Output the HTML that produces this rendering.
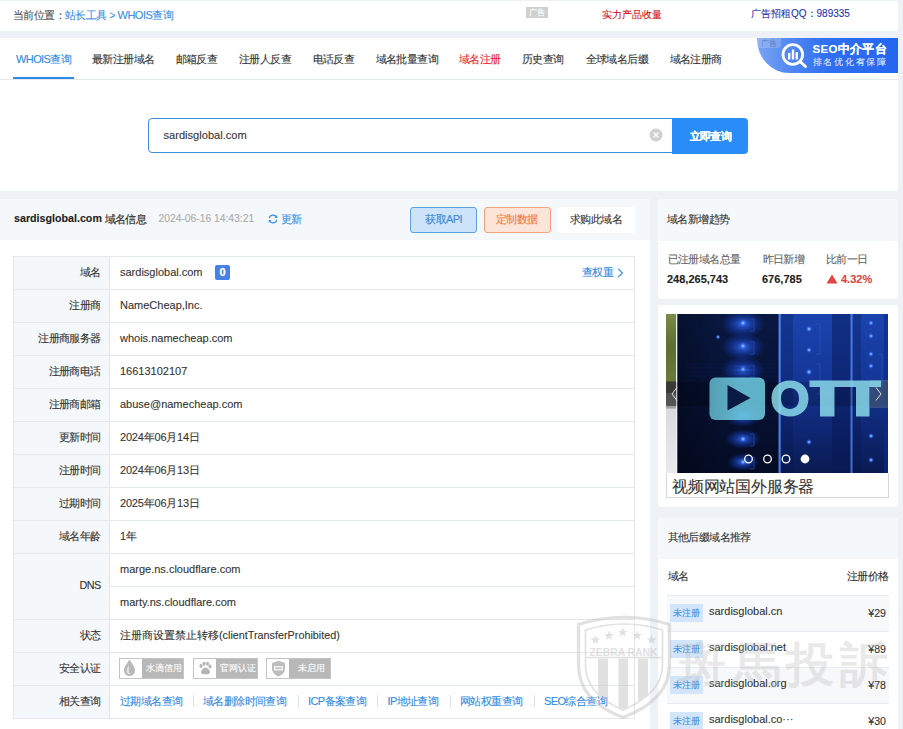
<!DOCTYPE html>
<html><head><meta charset="utf-8">
<style>
*{margin:0;padding:0;box-sizing:border-box}
html,body{width:903px;height:729px;overflow:hidden}
body{-webkit-text-stroke:.1px;background:#eef1f5;font-family:"Liberation Sans",sans-serif;color:#333;position:relative}
.abs{position:absolute}
.t{position:absolute;white-space:nowrap;line-height:1}
#top{left:0;top:1px;width:898px;height:30px;background:#fff;border-radius:0 3px 3px 0}
#nav{left:0;top:38px;width:898px;height:152.6px;background:#fff;border-radius:0 3px 3px 0}
#navline{left:0;top:79px;width:898px;height:1px;background:#e6e9ee}
.nv{font-size:11px;letter-spacing:-.6px;color:#333;top:53.5px}
.c{font-size:11px;letter-spacing:-.6px}
#left{left:0;top:199px;width:650px;height:540px;background:#fff}
#lhead{left:0;top:199px;width:650px;height:41px;background:#f5f8fb}
.card{position:absolute;left:658px;width:239.5px;background:#fff;border-radius:3px;overflow:hidden}
.chead{position:absolute;left:0;top:0;width:240px;height:41px;background:#f5f8fb}
.rows{position:absolute;left:13px;top:256px;width:622px;height:463px;border:1px solid #e4e7eb;border-right:none;border-bottom:none}
.lab{position:absolute;left:13px;width:97px;background:#f5f8fb;border-right:1px solid #e4e7eb}
.hl{position:absolute;height:1px;background:#e4e7eb}
.lt{position:absolute;right:802.4px;font-size:11px;letter-spacing:-.6px;color:#333;white-space:nowrap;line-height:1}
.vt{position:absolute;left:120px;font-size:11px;color:#333;white-space:nowrap;line-height:1}
.badge{position:absolute;top:658px;height:20.5px;width:65px;background:#b8b8b8;border:1px solid #c4c4c4}
.badge .ic{position:absolute;left:0;top:0;width:22px;height:18.5px;background:#fff}
.badge .bt{position:absolute;left:26px;top:4.5px;font-size:9px;color:#fff;line-height:1;white-space:nowrap}
.lk{position:absolute;top:696px;font-size:11px;letter-spacing:-.6px;color:#2f8ae5;white-space:nowrap;line-height:1}
.sep{position:absolute;top:695px;width:1px;height:12px;background:#dde2e8}
.rl{position:absolute;left:667px;width:222px;height:1px;background:#e8ebef}
.rb{position:absolute;left:670px;width:33px;height:18px;background:#d3e5fa;color:#3a8ee6;font-size:8.8px;line-height:18px;text-align:center}
.rd{position:absolute;left:709px;font-size:11px;color:#333;white-space:nowrap;line-height:1}
.rp{position:absolute;right:17px;font-size:10.6px;color:#333;white-space:nowrap;line-height:1}
</style></head><body>
<div id="top" class="abs"></div>
<div class="t c" style="left:13px;top:10px;color:#555">当前位置：</div>
<div class="t c" style="left:65px;top:10px;color:#3a8ee6">站长工具</div>
<div class="t" style="left:109.5px;top:10.5px;font-size:10px;color:#3a8ee6">&gt;</div>
<div class="t c" style="left:117.5px;top:10px;color:#3a8ee6;letter-spacing:-.5px">WHOIS查询</div>
<div class="abs" style="left:526px;top:6.5px;width:22px;height:11px;background:#d0d0d0;color:#fff;font-size:8px;text-align:center;line-height:11px">广告</div>
<div class="t" style="left:602px;top:10px;font-size:10px;color:#d4101a">实力产品收量</div>
<div class="t" style="left:751px;top:9px;font-size:10px;color:#2433b0">广告招租QQ：989335</div>

<div id="nav" class="abs"></div>
<div id="navline" class="abs"></div>
<div class="t nv" style="left:16px;color:#2d8ae6">WHOIS查询</div>
<div class="abs" style="left:13px;top:76.5px;width:60.5px;height:2.5px;background:#2d8ae6"></div>
<div class="t nv" style="left:92px">最新注册域名</div>
<div class="t nv" style="left:175.5px">邮箱反查</div>
<div class="t nv" style="left:239px">注册人反查</div>
<div class="t nv" style="left:312.5px">电话反查</div>
<div class="t nv" style="left:375.5px">域名批量查询</div>
<div class="t nv" style="left:459px;color:#e8262e">域名注册</div>
<div class="t nv" style="left:522px">历史查询</div>
<div class="t nv" style="left:585.5px">全球域名后缀</div>
<div class="t nv" style="left:669.5px">域名注册商</div>

<!-- SEO banner -->
<div class="abs" style="left:757px;top:38px;width:141px;height:34.5px;background:linear-gradient(90deg,#79a4f3 0%,#4f86f2 25%,#2f6ff0 50%,#2466ee 100%);border-bottom-left-radius:32px 34px"></div>
<div class="abs" style="left:757px;top:38px;width:24px;height:10px;background:rgba(255,255,255,.18);border-bottom-right-radius:3px"></div>
<div class="t" style="left:761px;top:39.5px;font-size:7.5px;color:rgba(60,90,160,.55)">广告</div>
<svg class="abs" style="left:778px;top:40px" width="32" height="30" viewBox="0 0 32 30">
  <circle cx="14.8" cy="14.5" r="9.8" fill="none" stroke="#fff" stroke-width="2.8"/>
  <line x1="22" y1="21.5" x2="27.5" y2="26.5" stroke="#fff" stroke-width="3" stroke-linecap="round"/>
  <rect x="10" y="13" width="2.4" height="6.5" fill="#fff"/>
  <rect x="13.8" y="9.5" width="2.4" height="10" fill="#fff"/>
  <rect x="17.6" y="12" width="2.4" height="7.5" fill="#fff"/>
</svg>
<div class="t" style="left:812.5px;top:44px;font-size:11.5px;color:#fff;font-weight:bold;letter-spacing:.3px">SEO中介平台</div>
<div class="t" style="left:812.5px;top:58px;font-size:9px;color:rgba(255,255,255,.85);letter-spacing:1.75px">排名优化有保障</div>

<!-- search -->
<div class="abs" style="left:148px;top:118px;width:526px;height:35px;border:1px solid #3d8fda;border-radius:4px 0 0 4px;background:#fff"></div>
<div class="t" style="left:163.5px;top:129.5px;font-size:11.1px;color:#333">sardisglobal.com</div>
<svg class="abs" style="left:649px;top:127.5px" width="14" height="14" viewBox="0 0 14 14"><circle cx="7" cy="7" r="6.5" fill="#cfcfcf"/><path d="M4.6 4.6L9.4 9.4M9.4 4.6L4.6 9.4" stroke="#fff" stroke-width="1.4"/></svg>
<div class="abs" style="left:672px;top:118px;width:76px;height:35.5px;background:#2a8cf6;border-radius:0 4px 4px 0"></div>
<div class="t" style="left:689.5px;top:130.5px;font-size:11px;letter-spacing:-.6px;color:#fff;font-weight:bold;-webkit-text-stroke:.2px #fff">立即查询</div>

<!-- left panel -->
<div id="left" class="abs"></div>
<div id="lhead" class="abs"></div>
<div class="t" style="left:14px;top:213px;font-size:10.7px;font-weight:bold;color:#222">sardisglobal.com</div>
<div class="t c" style="left:104.5px;top:214px;color:#333;-webkit-text-stroke:.2px #333">域名信息</div>
<div class="t" style="left:158.5px;top:214px;font-size:10.3px;color:#aaa">2024-06-16 14:43:21</div>
<svg class="abs" style="left:267.5px;top:214px" width="10" height="10" viewBox="0 0 10 10"><path d="M8.6 3.2A4 4 0 0 0 1.2 4.2M1.4 6.8A4 4 0 0 0 8.8 5.8" fill="none" stroke="#3a8ee6" stroke-width="1.2"/><path d="M9.3 1v3H6.5z M0.7 9V6h2.8z" fill="#3a8ee6"/></svg>
<div class="t c" style="left:280.5px;top:214px;color:#3a8ee6">更新</div>
<div class="abs" style="left:410px;top:206.5px;width:67px;height:26px;background:#cde3f9;border:1px solid #5ea2e2;border-radius:3px"></div>
<div class="t c" style="left:425.3px;top:214px;color:#3a87d6">获取API</div>
<div class="abs" style="left:483.5px;top:206.5px;width:67px;height:26px;background:#fce4d8;border:1px solid #f2a37d;border-radius:3px"></div>
<div class="t c" style="left:496px;top:214px;color:#f27a3e">定制数据</div>
<div class="abs" style="left:558px;top:206.5px;width:77px;height:26px;background:#fff;border-radius:3px"></div>
<div class="t c" style="left:570px;top:214px;color:#333">求购此域名</div>

<!-- table -->
<div class="lab" style="top:256px;height:463px"></div>
<div class="abs" style="left:13px;top:256px;width:622px;height:463px;border:1px solid #e4e7eb"></div>
<div class="hl" style="left:13px;top:289px;width:622px"></div>
<div class="hl" style="left:13px;top:322px;width:622px"></div>
<div class="hl" style="left:13px;top:355px;width:622px"></div>
<div class="hl" style="left:13px;top:388px;width:622px"></div>
<div class="hl" style="left:13px;top:421px;width:622px"></div>
<div class="hl" style="left:13px;top:454px;width:622px"></div>
<div class="hl" style="left:13px;top:487px;width:622px"></div>
<div class="hl" style="left:13px;top:520px;width:622px"></div>
<div class="hl" style="left:13px;top:553px;width:622px"></div>
<div class="hl" style="left:110px;top:586px;width:525px"></div>
<div class="hl" style="left:13px;top:619px;width:622px"></div>
<div class="hl" style="left:13px;top:652px;width:622px"></div>
<div class="hl" style="left:13px;top:685px;width:622px"></div>

<div class="lt" style="top:267px">域名</div>
<div class="lt" style="top:300px">注册商</div>
<div class="lt" style="top:333px">注册商服务器</div>
<div class="lt" style="top:366px">注册商电话</div>
<div class="lt" style="top:399px">注册商邮箱</div>
<div class="lt" style="top:432px">更新时间</div>
<div class="lt" style="top:465px">注册时间</div>
<div class="lt" style="top:498px">过期时间</div>
<div class="lt" style="top:531px">域名年龄</div>
<div class="lt" style="top:580px;font-size:10.8px">DNS</div>
<div class="lt" style="top:630px">状态</div>
<div class="lt" style="top:663px">安全认证</div>
<div class="lt" style="top:696px">相关查询</div>

<div class="vt" style="top:267px">sardisglobal.com</div>
<div class="abs" style="left:215px;top:265px;width:15px;height:15px;background:#4681e3;border-radius:2px;color:#fff;font-size:11px;font-weight:bold;text-align:center;line-height:15px;-webkit-text-stroke:.3px #fff">0</div>
<div class="t c" style="left:582px;top:267px;color:#2f8ae5">查权重</div>
<svg class="abs" style="left:617px;top:268px" width="7" height="10" viewBox="0 0 7 10"><path d="M1.2 .8L5.4 5 1.2 9.2" fill="none" stroke="#2f8ae5" stroke-width="1.1"/></svg>
<div class="vt" style="top:300px">NameCheap,Inc.</div>
<div class="vt" style="top:333px">whois.namecheap.com</div>
<div class="vt" style="top:366px">16613102107</div>
<div class="vt" style="top:399px">abuse@namecheap.com</div>
<div class="vt" style="top:432px;letter-spacing:-.2px">2024年06月14日</div>
<div class="vt" style="top:465px;letter-spacing:-.2px">2024年06月13日</div>
<div class="vt" style="top:498px;letter-spacing:-.2px">2025年06月13日</div>
<div class="vt" style="top:531px">1年</div>
<div class="vt" style="top:564px">marge.ns.cloudflare.com</div>
<div class="vt" style="top:597px">marty.ns.cloudflare.com</div>
<div class="vt" style="top:630px;font-size:10.8px">注册商设置禁止转移(clientTransferProhibited)</div>

<div class="badge" style="left:119px"><div class="ic"></div><div class="bt">水滴信用</div></div>
<svg class="abs" style="left:123px;top:659px" width="13" height="18" viewBox="0 0 13 18"><path d="M6.5 .5C4.2 4.5 1 7.5 1 11.5a5.5 5.5 0 0 0 11 0C12 7.5 8.8 4.5 6.5 .5z" fill="#b8b8b8"/><path d="M6.2 6C5 8 3.5 9.8 3.5 12a3 3 0 0 0 4 2.8C5.5 13.5 5.5 10 6.2 6z" fill="#e6e6e6"/></svg>
<div class="badge" style="left:193px"><div class="ic"></div><div class="bt">官网认证</div></div>
<svg class="abs" style="left:197px;top:661px" width="16" height="14" viewBox="0 0 16 14"><g fill="#b5b5b5"><ellipse cx="4" cy="5" rx="1.6" ry="2"/><ellipse cx="7" cy="2.8" rx="1.6" ry="2"/><ellipse cx="10.5" cy="2.8" rx="1.6" ry="2"/><ellipse cx="13" cy="5.5" rx="1.5" ry="1.9"/><path d="M8.5 6.5c-2 0-4.5 3-4.5 4.8 0 1.5 1.5 2 4.5 2s4.5-.5 4.5-2c0-1.8-2.5-4.8-4.5-4.8z"/></g></svg>
<div class="badge" style="left:266px"><div class="ic"></div><div class="bt" style="left:30.5px">未启用</div></div>
<svg class="abs" style="left:270.5px;top:659.5px" width="15" height="17" viewBox="0 0 15 17"><path d="M7.5 .8L14 3v5.5c0 4-3 6.5-6.5 8C4 15 1 12.5 1 8.5V3z" fill="#bdbdbd"/><rect x="3" y="6" width="9" height="4.5" fill="#f2f2f2"/><rect x="4.5" y="7.2" width="6" height="2" fill="#c8c8c8"/></svg>

<div class="lk" style="left:120px">过期域名查询</div>
<div class="sep" style="left:192.5px"></div>
<div class="lk" style="left:203px">域名删除时间查询</div>
<div class="sep" style="left:297.5px"></div>
<div class="lk" style="left:308px">ICP备案查询</div>
<div class="sep" style="left:376.5px"></div>
<div class="lk" style="left:387.5px">IP地址查询</div>
<div class="sep" style="left:449.5px"></div>
<div class="lk" style="left:460px">网站权重查询</div>
<div class="sep" style="left:533.5px"></div>
<div class="lk" style="left:544px">SEO综合查询</div>

<!-- right cards -->
<div class="card" style="top:199px;height:99.5px"><div class="chead" style="height:42px"></div></div>
<div class="t c" style="left:667px;top:214px;color:#333">域名新增趋势</div>
<div class="t c" style="left:667.5px;top:253.5px;color:#666">已注册域名总量</div>
<div class="t c" style="left:762.5px;top:253.5px;color:#666">昨日新增</div>
<div class="t c" style="left:826px;top:253.5px;color:#666">比前一日</div>
<div class="t" style="left:667px;top:273.5px;font-size:11px;font-weight:bold;color:#222">248,265,743</div>
<div class="t" style="left:762px;top:273.5px;font-size:11px;font-weight:bold;color:#222">676,785</div>
<svg class="abs" style="left:825.5px;top:274px" width="12" height="10" viewBox="0 0 12 10"><path d="M6 .5L11.5 9.5H.5z" fill="#e04444"/></svg>
<div class="t" style="left:841px;top:273.5px;font-size:11px;font-weight:bold;color:#e04444">4.32%</div>

<div class="card" style="top:305px;height:202px"></div>
<svg class="abs" style="left:666px;top:314px" width="222" height="159" viewBox="0 0 222 159">
  <defs>
    <linearGradient id="gl" x1="0" y1="0" x2="0" y2="1">
      <stop offset="0" stop-color="#091841"/><stop offset=".5" stop-color="#071234"/><stop offset="1" stop-color="#040b24"/>
    </linearGradient>
    <linearGradient id="gr" x1="0" y1="0" x2="0" y2="1">
      <stop offset="0" stop-color="#1a44ae"/><stop offset=".45" stop-color="#143594"/><stop offset="1" stop-color="#091a52"/>
    </linearGradient>
    <linearGradient id="gx" x1="0" y1="0" x2="1" y2="0">
      <stop offset="0" stop-color="#000" stop-opacity=".35"/><stop offset=".5" stop-color="#000" stop-opacity="0"/>
    </linearGradient>
    <radialGradient id="halo"><stop offset="0" stop-color="#3a74ff" stop-opacity=".85"/><stop offset=".5" stop-color="#1f50e0" stop-opacity=".45"/><stop offset="1" stop-color="#1a40d0" stop-opacity="0"/></radialGradient>
    <radialGradient id="spot"><stop offset="0" stop-color="#c0e0ff"/><stop offset=".4" stop-color="#4a88ff" stop-opacity=".8"/><stop offset="1" stop-color="#2050ff" stop-opacity="0"/></radialGradient>
    <linearGradient id="strip" x1="0" y1="0" x2="0" y2="1">
      <stop offset="0" stop-color="#7a8a48"/><stop offset=".2" stop-color="#5d6e30"/><stop offset=".42" stop-color="#6a7a3a"/><stop offset=".43" stop-color="#252a20"/><stop offset=".5" stop-color="#252a20"/><stop offset=".5" stop-color="#8c8c8c"/><stop offset=".59" stop-color="#a0a0a0"/><stop offset=".6" stop-color="#d9d9de"/><stop offset="1" stop-color="#e9e9ee"/>
    </linearGradient>
  </defs>
  <rect x="0" y="0" width="222" height="159" fill="url(#gl)"/>
  <rect x="0" y="0" width="110" height="159" fill="url(#gx)"/>
  <rect x="0" y="0" width="10" height="159" fill="url(#strip)"/>
  <rect x="10" y="0" width="1.3" height="159" fill="#eef2f8"/>
  <rect x="113" y="0" width="109" height="159" fill="url(#gr)"/>
  <rect x="166" y="0" width="19" height="159" fill="#061650" opacity=".45"/>
  <rect x="115" y="0" width="12" height="159" fill="#061650" opacity=".3"/>
  <rect x="187" y="0" width="8" height="159" fill="#061650" opacity=".3"/>
  <rect x="112.5" y="0" width="2.2" height="159" fill="#5a8cf4" opacity=".85"/>
  <rect x="184.5" y="0" width="2" height="159" fill="#5a8cf4" opacity=".75"/>
  <rect x="218" y="0" width="4" height="159" fill="#0a2a90" opacity=".6"/>
  <g fill="url(#halo)">
    <ellipse cx="77" cy="10" rx="22" ry="14"/><ellipse cx="77" cy="33" rx="22" ry="14"/><ellipse cx="77" cy="56" rx="22" ry="14"/>
    <ellipse cx="77" cy="102" rx="18" ry="11"/><ellipse cx="77" cy="125" rx="18" ry="10"/><ellipse cx="77" cy="148" rx="16" ry="9"/>
  </g>
  <g fill="url(#spot)">
    <circle cx="77" cy="9" r="4"/><circle cx="77" cy="32" r="4"/><circle cx="77" cy="55" r="4"/>
    <circle cx="77" cy="125" r="3.5"/><circle cx="77" cy="148" r="3.5"/>
    <circle cx="143" cy="15" r="3.5"/><circle cx="143" cy="36" r="3"/><circle cx="143" cy="58" r="3.5"/><circle cx="143" cy="128" r="3"/>
    <circle cx="205" cy="9" r="3"/><circle cx="205" cy="22" r="3"/><circle cx="205" cy="40" r="3"/><circle cx="205" cy="52" r="3"/><circle cx="205" cy="122" r="3"/><circle cx="205" cy="146" r="3"/>
    <circle cx="52" cy="23" r="2.5"/>
  </g>
  <g stroke="#2a58c8" stroke-width="1" fill="none" opacity=".6">
    <path d="M84 5h4v12h-4M84 28h4v12h-4M84 51h4v12h-4M84 120h4v12h-4M84 143h4v12h-4"/>
    <path d="M150 10h4v30h-4M150 50h4v30h-4M212 40h4v30h-4"/>
  </g>
  <g stroke="#0d2260" stroke-width=".6" opacity=".7">
    <path d="M20 50H110M20 54H110M20 58H110M20 62H110"/>
  </g>
  <rect x="0" y="68" width="222" height="24" fill="#000" opacity=".18"/>
  <rect x="0" y="68" width="10" height="24" fill="#444" opacity=".7"/>
  <rect x="204" y="66" width="18" height="28" fill="#8a9a8a" opacity=".3"/>
  <path d="M11 73.5L6 80 11 86.5" fill="none" stroke="#e0e0e0" stroke-width="1"/>
  <path d="M210 73.5L215 80 210 86.5" fill="none" stroke="#e0e0e0" stroke-width="1"/>
  <rect x="43.5" y="63.5" width="55.5" height="42.5" rx="6" fill="#6cc8de" opacity=".88"/>
  <rect x="43.5" y="63.5" width="55.5" height="42.5" rx="6" fill="url(#gx)" opacity=".3"/>
  <path d="M61.5 71L84.5 84 61.5 96.5z" fill="#0a1a42"/>
  <g fill="#8fe0f0" opacity=".82">
    <path fill-rule="evenodd" d="M124 66.5c-10.5 0-18.5 6.5-18.5 18s8 18 18.5 18 18.5-6.5 18.5-18-8-18-18.5-18zm0 7.5c5 0 9 3.5 9 10.5s-4 10.5-9 10.5-9-3.5-9-10.5 4-10.5 9-10.5z"/>
    <path d="M143.5 66.5h71.5v6.5h-11.5v29.5h-13.5v-29.5h-21.5v29.5h-14.5v-29.5h-10.5z"/>
  </g>
  <circle cx="82.5" cy="145" r="3.8" fill="none" stroke="#fff" stroke-width="1.3"/>
  <circle cx="101.5" cy="145" r="3.8" fill="none" stroke="#fff" stroke-width="1.3"/>
  <circle cx="120" cy="145" r="3.8" fill="none" stroke="#fff" stroke-width="1.3"/>
  <circle cx="139" cy="145" r="4.4" fill="#fff"/>
</svg>
<div class="abs" style="left:665.5px;top:473px;width:223px;height:25px;border:1px solid #d5d7da;border-top:none;background:#fff"></div>
<div class="t" style="left:672px;top:479px;font-size:16px;letter-spacing:-.2px;color:#333">视频网站国外服务器</div>

<div class="card" style="top:517.5px;height:220px"><div class="chead" style="height:41px"></div></div>
<div class="t c" style="left:667.5px;top:532px;color:#333">其他后缀域名推荐</div>
<div class="t c" style="left:667.5px;top:571px;color:#333">域名</div>
<div class="t c" style="left:847px;top:571px;color:#333">注册价格</div>
<div class="rl" style="top:595px"></div>
<div class="abs" style="left:667px;top:596px;width:222px;height:35px;background:#f7f8fa"></div>
<div class="rl" style="top:631px"></div>
<div class="rl" style="top:667px"></div>
<div class="abs" style="left:667px;top:668px;width:222px;height:35px;background:#f7f8fa"></div>
<div class="rl" style="top:703px"></div>
<div class="rb" style="top:604px">未注册</div><div class="rd" style="top:605.5px">sardisglobal.cn</div><div class="rp" style="top:607.5px">¥29</div>
<div class="rb" style="top:640px">未注册</div><div class="rd" style="top:641.5px">sardisglobal.net</div><div class="rp" style="top:643.5px">¥89</div>
<div class="rb" style="top:676px">未注册</div><div class="rd" style="top:677.5px">sardisglobal.org</div><div class="rp" style="top:679.5px">¥78</div>
<div class="rb" style="top:712px">未注册</div><div class="rd" style="top:713.5px">sardisglobal.co···</div><div class="rp" style="top:715.5px">¥30</div>

<!-- watermark -->
<svg class="abs" style="left:576px;top:613px;opacity:.5" width="96" height="106" viewBox="0 0 96 106">
  <g fill="none" stroke="#c4c4c4">
    <path d="M2.5 11.5Q48 -3 93.5 11.5V52C93.5 79 72 95 47 104.5 22 95 2.5 79 2.5 52z" stroke-width="3.2"/>
    <path d="M9.5 17Q48 5 86.5 17V52C86.5 74 68 88 47 97 26 88 9.5 74 9.5 52z" stroke-width="1.6"/>
    <line x1="10" y1="44.5" x2="86" y2="44.5" stroke-width="1.4"/>
  </g>
  <g fill="#c4c4c4">
    <text x="47.5" y="42.5" font-size="10.5" font-weight="bold" text-anchor="middle" font-family="Liberation Sans" textLength="68" lengthAdjust="spacingAndGlyphs">ZEBRA RANK</text>
    <polygon points="19.50,22.00 20.73,25.30 24.26,25.45 21.50,27.65 22.44,31.05 19.50,29.10 16.56,31.05 17.50,27.65 14.74,25.45 18.27,25.30"/><polygon points="33.00,17.60 34.23,20.90 37.76,21.05 35.00,23.25 35.94,26.65 33.00,24.70 30.06,26.65 31.00,23.25 28.24,21.05 31.77,20.90"/><polygon points="46.70,14.40 47.93,17.70 51.46,17.85 48.70,20.05 49.64,23.45 46.70,21.50 43.76,23.45 44.70,20.05 41.94,17.85 45.47,17.70"/><polygon points="61.20,17.60 62.43,20.90 65.96,21.05 63.20,23.25 64.14,26.65 61.20,24.70 58.26,26.65 59.20,23.25 56.44,21.05 59.97,20.90"/><polygon points="75.60,22.00 76.83,25.30 80.36,25.45 77.60,27.65 78.54,31.05 75.60,29.10 72.66,31.05 73.60,27.65 70.84,25.45 74.37,25.30"/>
    <path d="M22 45.5h10v43l-10-7z M42.5 45.5h9.5v50l-4.7 2.5-4.8-2.5z M62 45.5h10v36l-10 7z"/>
  </g>
</svg>
<div class="t" style="left:679px;top:641px;font-size:48px;font-weight:bold;color:rgba(185,185,185,.32);letter-spacing:5.5px;-webkit-text-stroke:0">斑馬投訴</div>
</body></html>
